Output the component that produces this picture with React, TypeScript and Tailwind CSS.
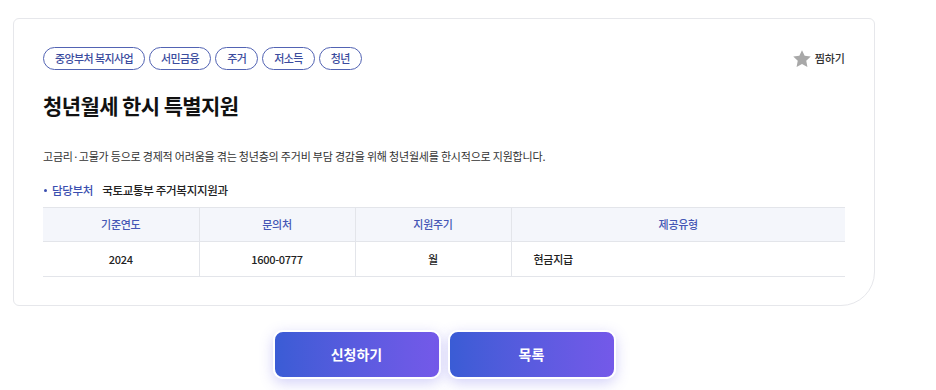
import React from 'react';

const tags = ['중앙부처 복지사업', '서민금융', '주거', '저소득', '청년'];

const StarIcon = () => (
  <svg viewBox="0 0 24 24" className="w-[20px] h-[20px]" fill="#a8a8a8">
    <path d="M12 1.5l3.2 6.7 7.3.9-5.4 5.1 1.4 7.3L12 17.9l-6.5 3.6 1.4-7.3-5.4-5.1 7.3-.9z" />
  </svg>
);

export default function App() {
  return (
    <div className="w-[936px] h-[390px] bg-white overflow-hidden" style={{ fontFamily: '"Noto Sans CJK KR", "Noto Sans", sans-serif' }}>
      <div className="ml-[13px] w-[862px] pt-[18px]">
        <div className="border border-[#e6e7eb] rounded-[6px] rounded-br-[34px] px-[29px] pt-[28px] pb-[28px]">
          <div className="flex items-center justify-between">
            <div className="flex gap-[4px]">
              {tags.map(t => (
                <span key={t} className="h-[23px] px-[11px] flex items-center rounded-full border border-[#5263b3] text-[11px] font-medium text-[#3b4c9e] leading-none tracking-[-0.6px]">
                  {t}
                </span>
              ))}
            </div>
            <button className="flex items-center gap-[3px] text-[11px] font-medium text-[#333]">
              <StarIcon />
              찜하기
            </button>
          </div>
          <h1 className="mt-[21px] text-[21px] font-bold text-[#111] leading-[28px] tracking-[-0.6px]">청년월세 한시 특별지원</h1>
          <p className="mt-[28px] text-[11px] text-[#333] leading-[18px] tracking-[-0.2px]">
            고금리·고물가 등으로 경제적 어려움을 겪는 청년층의 주거비 부담 경감을 위해 청년월세를 한시적으로 지원합니다.
          </p>
          <div className="mt-[16px] flex items-center text-[11.5px] leading-[18px] tracking-[-0.3px]">
            <span className="w-[3px] h-[3px] rounded-full bg-[#3b4fb0] ml-[1px] mr-[5px]" />
            <span className="text-[#3b4fb0] font-medium">담당부처</span>
            <span className="ml-[9px] text-[#222] font-medium">국토교통부 주거복지지원과</span>
          </div>
          <table className="mt-[8px] w-full border-collapse text-[11px] tracking-[-0.3px]">
            <thead>
              <tr className="bg-[#f4f6fb] border-t border-b border-[#e3e5ea]">
                <th className="w-[156px] h-[34px] font-medium text-[#4556b5] border-r border-[#e3e5ea]">기준연도</th>
                <th className="w-[156px] font-medium text-[#4556b5] border-r border-[#e3e5ea]">문의처</th>
                <th className="w-[156px] font-medium text-[#4556b5] border-r border-[#e3e5ea]">지원주기</th>
                <th className="font-medium text-[#4556b5]">제공유형</th>
              </tr>
            </thead>
            <tbody>
              <tr className="border-b border-[#e3e5ea]">
                <td className="h-[35px] text-center font-medium text-[#222] border-r border-[#e3e5ea]">2024</td>
                <td className="text-center font-medium text-[#222] border-r border-[#e3e5ea]">1600-0777</td>
                <td className="text-center font-medium text-[#222] border-r border-[#e3e5ea]">월</td>
                <td className="pl-[22px] font-medium text-[#222]">현금지급</td>
              </tr>
            </tbody>
          </table>
        </div>
        <div className="mt-[24px] flex justify-center gap-[7px]">
          <button className="w-[168px] h-[49px] rounded-[10px] border-2 border-white bg-gradient-to-r from-[#3a5cd5] to-[#7459e9] text-white text-[14px] font-bold shadow-[0_4px_14px_rgba(98,88,230,0.28)]">
            신청하기
          </button>
          <button className="w-[168px] h-[49px] rounded-[10px] border-2 border-white bg-gradient-to-r from-[#3a5cd5] to-[#7459e9] text-white text-[14px] font-bold shadow-[0_4px_14px_rgba(98,88,230,0.28)]">
            목록
          </button>
        </div>
      </div>
    </div>
  );
}
